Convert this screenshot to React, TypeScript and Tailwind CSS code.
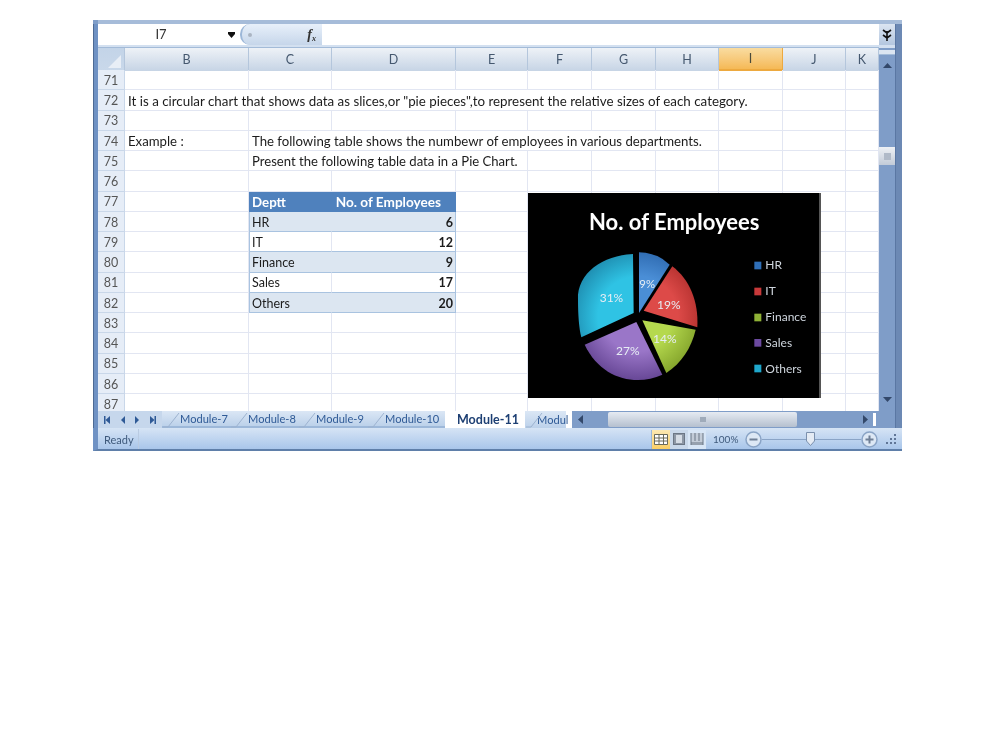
import React from "react";

const COLS = "grid grid-cols-[27px_124px_83px_124px_72px_64px_64px_63px_64px_63px_33px]";
const CELL = "border-r border-b border-[#e2e6f2] h-[20.25px] pt-[3px] flex items-center overflow-hidden whitespace-nowrap";
const LETTERS = ["B", "C", "D", "E", "F", "G", "H", "I", "J", "K"];
const ROWS = [71, 72, 73, 74, 75, 76, 77, 78, 79, 80, 81, 82, 83, 84, 85, 86, 87];

type Cell = { span?: string; text?: string; cls?: string };

const TEXT = "text-[13.2px] text-[#1c1c1c] pl-[3px]";

const tableRow = (a: string, b: string, odd: boolean): Cell[] => [
  {},
  { text: a, cls: `text-[12.5px] text-[#1c1c1c] pl-[2px] border-l border-l-[#a9c3e0] border-b-[#a9c3e0] ${odd ? "bg-[#dce6f1] border-r-[#dce6f1]" : ""}` },
  { text: b, cls: `text-[12.5px] text-[#1c1c1c] font-bold justify-end pr-[2px] border-r-[#a9c3e0] border-b-[#a9c3e0] ${odd ? "bg-[#dce6f1]" : ""}` },
  {}, {}, {}, {}, {}, {}, {},
];

const blank = (): Cell[] => Array.from({ length: 10 }, () => ({}));

const rowData: Record<number, Cell[]> = {
  72: [
    { span: "col-span-8", text: 'It is a circular chart that shows data as slices,or "pie pieces",to represent the relative sizes of each category.', cls: "text-[13.35px] text-[#1c1c1c] pl-[3px]" },
    {}, {},
  ],
  74: [
    { text: "Example :", cls: TEXT },
    { span: "col-span-6", text: "The following table shows the numbewr of employees in various departments.", cls: TEXT },
    {}, {}, {},
  ],
  75: [
    {},
    { span: "col-span-3", text: "Present the following table data in a Pie Chart.", cls: "text-[13.1px] text-[#1c1c1c] pl-[3px]" },
    {}, {}, {}, {}, {}, {},
  ],
  77: [
    {},
    { text: "Deptt", cls: "text-[13.3px] text-white font-bold bg-[#4f81bd] pl-[3px] border-r-[#4f81bd] border-b-[#4f81bd]" },
    { text: "No. of Employees", cls: "text-[13.6px] text-white font-bold bg-[#4f81bd] justify-end pr-[14px] border-r-[#4f81bd] border-b-[#4f81bd]" },
    {}, {}, {}, {}, {}, {}, {},
  ],
  78: tableRow("HR", "6", true),
  79: tableRow("IT", "12", false),
  80: tableRow("Finance", "9", true),
  81: tableRow("Sales", "17", false),
  82: tableRow("Others", "20", true),
};

function Slash() {
  return (
    <svg className="absolute left-0 top-0" width="20" height="17" viewBox="0 0 20 17">
      <path d="M1 16 L6 16 L17 2" fill="none" stroke="#9db3d0" strokeWidth="1" />
    </svg>
  );
}

function Tab({ w, pl, text }: { w: string; pl: string; text: string }) {
  return (
    <div className={`relative shrink-0 h-full flex items-center pt-[2px] whitespace-nowrap text-[11.1px] text-[#2f5a96] ${w} ${pl}`}>
      <Slash />
      <span>{text}</span>
    </div>
  );
}

function Chart() {
  return (
    <div className="absolute left-[430px] top-[123px] w-[293px] h-[205px] bg-black border-r-2 border-r-[#555]">
      <svg width="293" height="205" viewBox="25 25 879 615">
        <defs>
          <radialGradient id="gb" gradientUnits="userSpaceOnUse" cx="355" cy="395" r="200">
            <stop offset="0.6" stopColor="#4a8ed6" />
            <stop offset="1" stopColor="#2e6ab0" />
          </radialGradient>
          <radialGradient id="gr" gradientUnits="userSpaceOnUse" cx="355" cy="395" r="200">
            <stop offset="0.6" stopColor="#dd4a48" />
            <stop offset="1" stopColor="#b02e2c" />
          </radialGradient>
          <radialGradient id="gg" gradientUnits="userSpaceOnUse" cx="355" cy="395" r="200">
            <stop offset="0.5" stopColor="#b5d94e" />
            <stop offset="1" stopColor="#7f9f28" />
          </radialGradient>
          <radialGradient id="gp" gradientUnits="userSpaceOnUse" cx="355" cy="395" r="210">
            <stop offset="0.5" stopColor="#9a76c8" />
            <stop offset="1" stopColor="#5d3e8c" />
          </radialGradient>
          <radialGradient id="gc" gradientUnits="userSpaceOnUse" cx="355" cy="395" r="200">
            <stop offset="0.6" stopColor="#2fc3e4" />
            <stop offset="1" stopColor="#1f8fb2" />
          </radialGradient>
        </defs>
        <path d="M358 385 L358 203 Q415 205 450 240 Z" fill="url(#gb)" />
        <path d="M372 378 L458 245 C510 285 537 350 533 428 Z" fill="url(#gr)" />
        <path d="M368 407 L528 435 C515 490 485 535 440 565 Z" fill="url(#gg)" />
        <path d="M350 412 L428 570 C350 605 245 585 195 480 Z" fill="url(#gp)" />
        <path d="M342 385 L340 208 C250 212 172 265 175 345 C175 390 178 430 185 458 Z" fill="url(#gc)" />
        <g fontFamily="Lato, sans-serif" fontSize="36" fill="#e6edf4">
          <text x="359" y="311" fontSize="34">9%</text>
          <text x="412" y="372">19%</text>
          <text x="400" y="476">14%</text>
          <text x="289" y="512">27%</text>
          <text x="240" y="353">31%</text>
        </g>
        <text x="208" y="136" fontFamily="Lato, sans-serif" fontSize="66" fontWeight="700" fill="#fff">No. of Employees</text>
        <g fontFamily="Lato, sans-serif" fontSize="36" fill="#cfd6de">
          <rect x="704" y="231" width="21" height="23" fill="#2f6fb8" />
          <text x="737" y="254">HR</text>
          <rect x="704" y="309" width="21" height="23" fill="#c8393a" />
          <text x="737" y="332">IT</text>
          <rect x="704" y="387" width="21" height="23" fill="#8fb236" />
          <text x="737" y="410">Finance</text>
          <rect x="704" y="463" width="21" height="23" fill="#6c4aa0" />
          <text x="737" y="486">Sales</text>
          <rect x="704" y="540" width="21" height="23" fill="#1fa7cc" />
          <text x="737" y="564">Others</text>
        </g>
      </svg>
    </div>
  );
}

export default function App() {
  return (
    <div className="w-[1000px] h-[750px] bg-white pt-[20px] pl-[93px] font-['Lato',sans-serif] blur-[0.7px]">
      <div className="w-[809px] h-[431px] bg-[#7f9dc8] flex flex-col">
        {/* top strip */}
        <div className="h-[4px] bg-[#a6bcd9] ml-[5px]" />
        <div className="flex flex-1 min-h-0">
          <div className="w-[5px] bg-[#6f92c4] border-l border-l-[#4d6a94]" />
          <div className="w-[781px] flex flex-col bg-white">
            {/* formula bar */}
            <div className="h-[21px] flex items-center bg-white">
              <div className="w-[142px] h-full relative flex items-center justify-center text-[13px] text-[#333] pr-[16px]">
                I7
                <svg className="absolute right-[4px] top-[8px]" width="9" height="6" viewBox="0 0 9 6">
                  <rect x="1" y="0" width="7" height="2" fill="#111" />
                  <path d="M1 2 H8 L4.5 6 Z" fill="#111" />
                </svg>
              </div>
              <div className="w-[82px] h-full relative rounded-l-[10px] bg-gradient-to-b from-[#e8f0fa] to-[#c6d6ea] border-l-2 border-l-[#9cb7d8] flex items-center justify-between pl-[6px] pr-[6px]">
                <div className="w-[4px] h-[4px] bg-[#aab4c2] rounded-full" />
                <span className="font-['Liberation_Serif',serif] italic font-bold text-[14px] text-[#333]">f<sub className="text-[8px]">x</sub></span>
              </div>
              <div className="flex-1" />
            </div>
            <div className="h-[3px] bg-[#d3e0f0] border-b border-b-[#a3bbd8]" />
            {/* column headers */}
            <div className={`${COLS} h-[22px]`}>
              <div className="bg-gradient-to-b from-[#c3d4e8] to-[#c9d8ea] relative border-r border-r-[#b4c6dc]">
                <svg className="absolute right-[3px] bottom-[3px]" width="13" height="13" viewBox="0 0 13 13">
                  <path d="M13 0 V13 H0 Z" fill="#e8eef6" />
                </svg>
              </div>
              {LETTERS.map((l) => (
                <div
                  key={l}
                  className={
                    l === "I"
                      ? "flex items-center justify-center pt-[2px] text-[12.5px] text-[#4a4a3a] bg-gradient-to-b from-[#f9dca0] to-[#f5b955] border-r border-b-2 border-[#eda93f]"
                      : "flex items-center justify-center pt-[2px] text-[12.5px] text-[#45586f] bg-gradient-to-b from-[#eef2f7] to-[#c6d4e5] border-r border-r-[#b4c6dc]"
                  }
                >
                  {l}
                </div>
              ))}
            </div>
            {/* sheet */}
            <div className="relative flex-1 min-h-0 overflow-hidden">
              {ROWS.map((n) => {
                const cells = rowData[n] ?? blank();
                return (
                  <div key={n} className={COLS}>
                    <div className="h-[20.25px] pt-[3px] bg-[#e6edf7] border-r border-b border-[#c9d7e9] flex items-center justify-center text-[12.5px] text-[#555]">
                      {n}
                    </div>
                    {cells.map((c, i) => (
                      <div key={i} className={`${CELL} ${c.span ?? ""} ${c.cls ?? ""}`}>
                        {c.text}
                      </div>
                    ))}
                  </div>
                );
              })}
              <Chart />
            </div>
            {/* tabs */}
            <div className="h-[17px] flex bg-[#7f9dc8]">
              <div className="w-[64px] shrink-0 h-full flex items-center justify-between px-[6px] bg-[#c6d7ec] text-[#2f5a96]">
                <svg width="6" height="8" viewBox="0 0 6 8"><rect width="1.5" height="8" fill="#2f5a96" /><path d="M6 0 V8 L1.5 4 Z" fill="#2f5a96" /></svg>
                <svg width="4" height="8" viewBox="0 0 4 8"><path d="M4 0 V8 L0 4 Z" fill="#2f5a96" /></svg>
                <svg width="4" height="8" viewBox="0 0 4 8"><path d="M0 0 V8 L4 4 Z" fill="#2f5a96" /></svg>
                <svg width="6" height="8" viewBox="0 0 6 8"><rect x="4.5" width="1.5" height="8" fill="#2f5a96" /><path d="M0 0 V8 L4.5 4 Z" fill="#2f5a96" /></svg>
              </div>
              <div className="flex shrink-0 h-full w-[283px] bg-gradient-to-b from-[#dbe7f5] to-[#bcd1ea] border-b-2 border-b-[#9db8d9]">
                <Tab w="w-[68px]" pl="pl-[18px]" text="Module-7" />
                <Tab w="w-[68px]" pl="pl-[18px]" text="Module-8" />
                <Tab w="w-[69px]" pl="pl-[18px]" text="Module-9" />
                <Tab w="w-[78px]" pl="pl-[18px]" text="Module-10" />
              </div>
              <div className="w-[80px] shrink-0 h-full bg-white flex items-center pt-[2px] pl-[12px] whitespace-nowrap text-[12.5px] font-bold text-[#1d3f73]">Module-11</div>
              <div className="relative w-[41px] shrink-0 h-full flex items-center pt-[2px] pl-[12px] whitespace-nowrap text-[11.1px] text-[#2f5a96] bg-gradient-to-b from-[#dbe7f5] to-[#bcd1ea]">
                <Slash />
                <span>Modul</span>
              </div>
              <div className="w-[6px] shrink-0 h-full bg-white" />
              <div className="w-[307px] shrink-0 h-full bg-[#7f9dc8] flex items-center pl-[6px]">
                <svg width="5" height="9" viewBox="0 0 5 9"><path d="M5 0 V9 L0 4.5 Z" fill="#33486a" /></svg>
                <div className="ml-[25px] w-[189px] h-[15px] bg-gradient-to-b from-[#e6ebf2] to-[#b5c0cf] rounded-[2px] flex items-center justify-center">
                  <div className="w-[6px] h-[5px] bg-[#9fabba]" />
                </div>
                <svg className="ml-[66px]" width="5" height="9" viewBox="0 0 5 9"><path d="M0 0 V9 L5 4.5 Z" fill="#33486a" /></svg>
                <div className="ml-[5px] w-[3px] h-[13px] bg-white" />
              </div>
            </div>
          </div>
          {/* vertical scrollbar */}
          <div className="w-[16px] flex flex-col items-center bg-[#7f9dc8]">
            <div className="w-full h-[21px] bg-gradient-to-b from-[#dbe5f1] to-[#b3c6df] flex items-center justify-center">
              <svg width="10" height="12" viewBox="0 0 10 12">
                <path d="M1 1 L5 4 L9 1 M1 6 L5 9 L9 6 M5 2 V12" fill="none" stroke="#111" strokeWidth="1.6" />
              </svg>
            </div>
            <div className="w-full h-[3px] bg-[#d3e0f0]" />
            <div className="w-full h-[5px] mt-[2px] bg-[#dbe5f1] border-b border-b-[#a3bbd8]" />
            <svg className="mt-[8px]" width="9" height="5" viewBox="0 0 9 5"><path d="M0 5 H9 L4.5 0 Z" fill="#33486a" /></svg>
            <div className="mt-[79px] w-full h-[18px] bg-gradient-to-b from-[#eef1f5] to-[#c2cbd8] flex items-center justify-center">
              <div className="w-[7px] h-[7px] bg-[#b0bac8]" />
            </div>
            <svg className="mt-[232px]" width="9" height="5" viewBox="0 0 9 5"><path d="M0 0 H9 L4.5 5 Z" fill="#33486a" /></svg>
          </div>
          <div className="w-[7px] bg-[#6c89b4] border-l border-l-[#5a77a3]" />
        </div>
        {/* status bar */}
        <div className="h-[23px] flex items-center pt-[1px] bg-gradient-to-b from-[#d6e4f5] to-[#a9c6ea] border-b-2 border-b-[#5f7fa9] border-l-[5px] border-l-[#6f92c4]">
          <div className="w-[41px] h-full flex items-center pl-[6px] pt-[2px] text-[11px] text-[#3f5a7c] border-r border-r-[#b9cbe2]">Ready</div>
          <div className="w-[512px]" />
          <div className="flex h-[19px] border-l border-l-[#9db8d9] bg-[#d8e6f6]">
            <div className="w-[18px] h-full bg-gradient-to-b from-[#fde9b2] to-[#fbcf63] flex items-center justify-center">
              <svg width="14" height="11" viewBox="0 0 14 11"><path d="M0.5 0.5 H13.5 V10.5 H0.5 Z M0.5 4 H13.5 M0.5 7 H13.5 M5 0.5 V10.5 M9.5 0.5 V10.5" fill="#fff" stroke="#6b6b5a" strokeWidth="1" /></svg>
            </div>
            <div className="w-[18px] h-full flex items-center justify-center bg-[#c9d8ea]">
              <svg width="12" height="12" viewBox="0 0 12 12"><rect x="0.5" y="0.5" width="11" height="11" fill="#8d97a5" stroke="#6b7685" /><rect x="3" y="2" width="6" height="8" fill="#d5dce5" /></svg>
            </div>
            <div className="w-[18px] h-full flex items-center justify-center">
              <svg width="14" height="12" viewBox="0 0 14 12"><path d="M1 0 V10 H13 V0 M1 10 V12 H13 V10" fill="#c3ccd8" stroke="#6b7685" /><path d="M5 0 V8 M9 0 V8" stroke="#6b7685" /></svg>
            </div>
          </div>
          <div className="ml-[7px] w-[26px] whitespace-nowrap text-[10px] text-[#3f5a7c]">100%</div>
          <svg className="ml-[6px]" width="17" height="17" viewBox="0 0 17 17">
            <circle cx="8.5" cy="8.5" r="7.5" fill="#dde8f5" stroke="#8aa4c6" strokeWidth="1.5" />
            <rect x="4.5" y="7.5" width="8" height="2" fill="#6f7f96" />
          </svg>
          <div className="relative w-[99px] h-[1px] bg-[#8aa4c6]">
            <svg className="absolute left-[44px] top-[-7px]" width="9" height="14" viewBox="0 0 9 14">
              <path d="M0.5 0.5 H8.5 V9 L4.5 13.5 L0.5 9 Z" fill="#e4ebf4" stroke="#7b90ad" />
            </svg>
          </div>
          <svg width="17" height="17" viewBox="0 0 17 17">
            <circle cx="8.5" cy="8.5" r="7.5" fill="#dde8f5" stroke="#8aa4c6" strokeWidth="1.5" />
            <path d="M4.5 7.5 H7.5 V4.5 H9.5 V7.5 H12.5 V9.5 H9.5 V12.5 H7.5 V9.5 H4.5 Z" fill="#6f7f96" />
          </svg>
          <svg className="ml-[8px]" width="12" height="12" viewBox="0 0 12 12">
            <g fill="#5f7596">
              <rect x="8" y="1" width="2" height="2" />
              <rect x="8" y="5" width="2" height="2" />
              <rect x="4" y="5" width="2" height="2" />
              <rect x="8" y="9" width="2" height="2" />
              <rect x="4" y="9" width="2" height="2" />
              <rect x="0" y="9" width="2" height="2" />
            </g>
          </svg>
        </div>
      </div>
    </div>
  );
}
